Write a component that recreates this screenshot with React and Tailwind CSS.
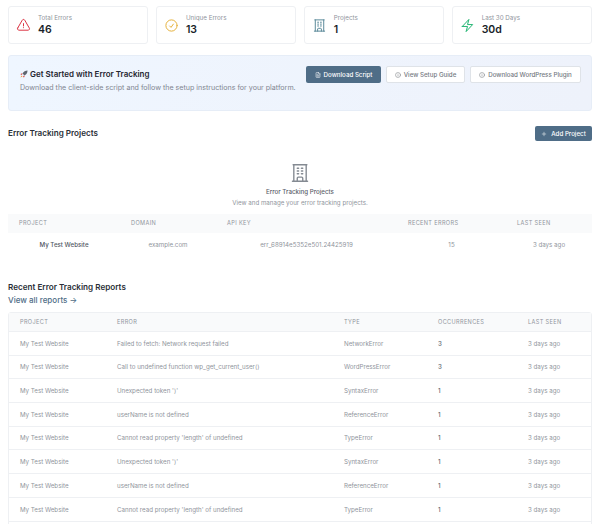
import { FileText, Info, Plus } from "lucide-react";

function Outline({ d, className, sw = 1.6 }) {
  return (
    <svg viewBox="0 0 24 24" fill="none" stroke="currentColor" strokeWidth={sw} strokeLinecap="round" strokeLinejoin="round" className={className}>
      <path d={d} />
    </svg>
  );
}

const alertPath = "M12 9v3.75m-9.303 3.376c-.866 1.5.217 3.374 1.948 3.374h14.71c1.73 0 2.813-1.874 1.948-3.374L13.949 3.378c-.866-1.5-3.032-1.5-3.898 0L2.697 16.126ZM12 15.75h.007v.008H12v-.008Z";
const checkPath = "M9 12.75 11.25 15 15 9.75M21 12a9 9 0 1 1-18 0 9 9 0 0 1 18 0Z";
const buildingPath = "M3.75 21h16.5M4.5 3h15M5.25 3v18m13.5-18v18M9 6.75h1.5m-1.5 3h1.5m-1.5 3h1.5m3-6H15m-1.5 3H15m-1.5 3H15M9 21v-3.375c0-.621.504-1.125 1.125-1.125h3.75c.621 0 1.125.504 1.125 1.125V21";
const boltPath = "m3.75 13.5 10.5-11.25L12 10.5h8.25L9.75 21.75 12 13.5H3.75Z";

const stats = [
  { label: "Total Errors", value: "46", d: alertPath, color: "text-[#dc3545]" },
  { label: "Unique Errors", value: "13", d: checkPath, color: "text-[#e6b23c]" },
  { label: "Projects", value: "1", d: buildingPath, color: "text-[#5b8a9a]" },
  { label: "Last 30 Days", value: "30d", d: boltPath, color: "text-[#22b573]" },
];

const reports = [
  ["Failed to fetch: Network request failed", "NetworkError", "3"],
  ["Call to undefined function wp_get_current_user()", "WordPressError", "3"],
  ["Unexpected token ')'", "SyntaxError", "1"],
  ["userName is not defined", "ReferenceError", "1"],
  ["Cannot read property 'length' of undefined", "TypeError", "1"],
  ["Unexpected token ')'", "SyntaxError", "1"],
  ["userName is not defined", "ReferenceError", "1"],
  ["Cannot read property 'length' of undefined", "TypeError", "1"],
];

const projectCols = "grid grid-cols-[112px_96px_181px_109px_86px]";
const reportCols = "grid grid-cols-[97px_227px_94px_90px_74px]";

function Th({ children }) {
  return <div className="whitespace-nowrap px-[11px] text-[5.6px] tracking-[0.35px] text-[#8f949c]">{children}</div>;
}

export default function App() {
  return (
    <div className="h-[524px] overflow-hidden bg-white px-2 font-['Inter',sans-serif] text-[#1f2937] antialiased">
      <div className="grid grid-cols-4 gap-[7.5px] pt-[6px]">
        {stats.map((s) => (
          <div key={s.label} className="flex h-[38px] items-center gap-[7px] rounded-[3px] border border-[#eef0f3] px-[7px]">
            <Outline d={s.d} className={`h-[15px] w-[15px] ${s.color}`} />
            <div>
              <div className="text-[6.25px] leading-[9px] text-[#8f949c]">{s.label}</div>
              <div className="text-[10.5px] font-semibold leading-[13px] text-[#1a1f29]">{s.value}</div>
            </div>
          </div>
        ))}
      </div>

      <div className="mt-[11px] flex h-[56px] justify-between rounded-[3px] border border-[#e6edf7] bg-gradient-to-r from-[#eff6ff] to-[#eef2fb] pl-[11px] pr-[10px] pt-[10px]">
        <div className="whitespace-nowrap">
          <div className="flex items-center gap-[2px] pt-[2px] text-[8px] font-semibold leading-[12px] text-[#1f2530]">
            <svg viewBox="0 0 16 16" className="h-[8px] w-[8px]">
              <path d="M15 1c-4 0-8 2-10 6l4 4c4-2 6-6 6-10z" fill="#5f6670" />
              <path d="M5 7H2l-1 2 3 1zM9 11v3l-2 1-1-3z" fill="#d9534f" />
              <path d="M3 11l2 2-4 2z" fill="#f0a030" />
            </svg>
            Get Started with Error Tracking
          </div>
          <div className="mt-[3px] text-[7.1px] leading-[10px] text-[#7f8590]">
            Download the client-side script and follow the setup instructions for your platform.
          </div>
        </div>
        <div className="flex h-[17px] gap-[5px]">
          <div className="flex w-[75px] items-center justify-center gap-[3px] rounded-[2px] bg-[#4f6d87] text-[6.2px] font-medium text-white">
            <FileText className="h-[6px] w-[6px]" /> Download Script
          </div>
          <div className="flex w-[79px] items-center justify-center gap-[3px] rounded-[2px] border border-[#dfe3e8] bg-white text-[6.2px] font-medium text-[#74797f]">
            <Info className="h-[6px] w-[6px]" /> View Setup Guide
          </div>
          <div className="flex w-[111px] items-center justify-center gap-[3px] rounded-[2px] border border-[#dfe3e8] bg-white text-[6.2px] font-medium text-[#74797f]">
            <Info className="h-[6px] w-[6px]" /> Download WordPress Plugin
          </div>
        </div>
      </div>

      <div className="mt-[15px] flex h-[15px] items-center justify-between">
        <div className="text-[8.15px] font-semibold text-[#2a2f38]">Error Tracking Projects</div>
        <div className="flex h-[15px] w-[57px] items-center justify-center gap-[4px] rounded-[2px] bg-[#4f6d87] text-[6.2px] font-medium text-white">
          <Plus className="h-[6px] w-[6px]" /> Add Project
        </div>
      </div>

      <div className="mt-[21px] flex flex-col items-center">
        <Outline d={buildingPath} className="h-[22px] w-[22px] text-[#848a92]" sw={1.5} />
        <div className="mt-[3px] text-[6.2px] font-medium leading-[10px] text-[#5b616a]">Error Tracking Projects</div>
        <div className="mt-[1px] text-[6.2px] leading-[10px] text-[#8f949c]">View and manage your error tracking projects.</div>
      </div>

      <div className={`${projectCols} mt-[6px] h-[19px] items-center bg-[#f9fafb]`}>
        <Th>PROJECT</Th>
        <Th>DOMAIN</Th>
        <Th>API KEY</Th>
        <Th>RECENT ERRORS</Th>
        <Th>LAST SEEN</Th>
      </div>
      <div className={`${projectCols} h-[23px] items-center text-center text-[6.2px] text-[#8f949c]`}>
        <div className="font-medium text-[#50565f]">My Test Website</div>
        <div>example.com</div>
        <div>err_68914e5352e501.24425919</div>
        <div>15</div>
        <div>3 days ago</div>
      </div>

      <div className="mt-[25px] text-[8.15px] font-semibold leading-[12px] text-[#2a2f38]">Recent Error Tracking Reports</div>
      <div className="mt-[1px] text-[8px] font-medium leading-[12px] text-[#4f6d87]">View all reports →</div>

      <div className="mt-[6px] rounded-t-[3px] border border-[#eef0f3] pb-[24px]">
        <div className={`${reportCols} h-[18px] items-center bg-[#f9fafb]`}>
          <Th>PROJECT</Th>
          <Th>ERROR</Th>
          <Th>TYPE</Th>
          <Th>OCCURRENCES</Th>
          <Th>LAST SEEN</Th>
        </div>
        {reports.map((r, i) => (
          <div key={i} className={`${reportCols} h-[23.7px] items-center border-t border-[#eef0f3] text-[6.2px] text-[#8f949c]`}>
            <div className="px-[11px]">My Test Website</div>
            <div className="px-[11px]">{r[0]}</div>
            <div className="px-[11px]">{r[1]}</div>
            <div className="px-[11px] font-medium text-[#666b73]">{r[2]}</div>
            <div className="whitespace-nowrap px-[11px]">3 days ago</div>
          </div>
        ))}
        <div className="border-t border-[#eef0f3]" />
      </div>
    </div>
  );
}
